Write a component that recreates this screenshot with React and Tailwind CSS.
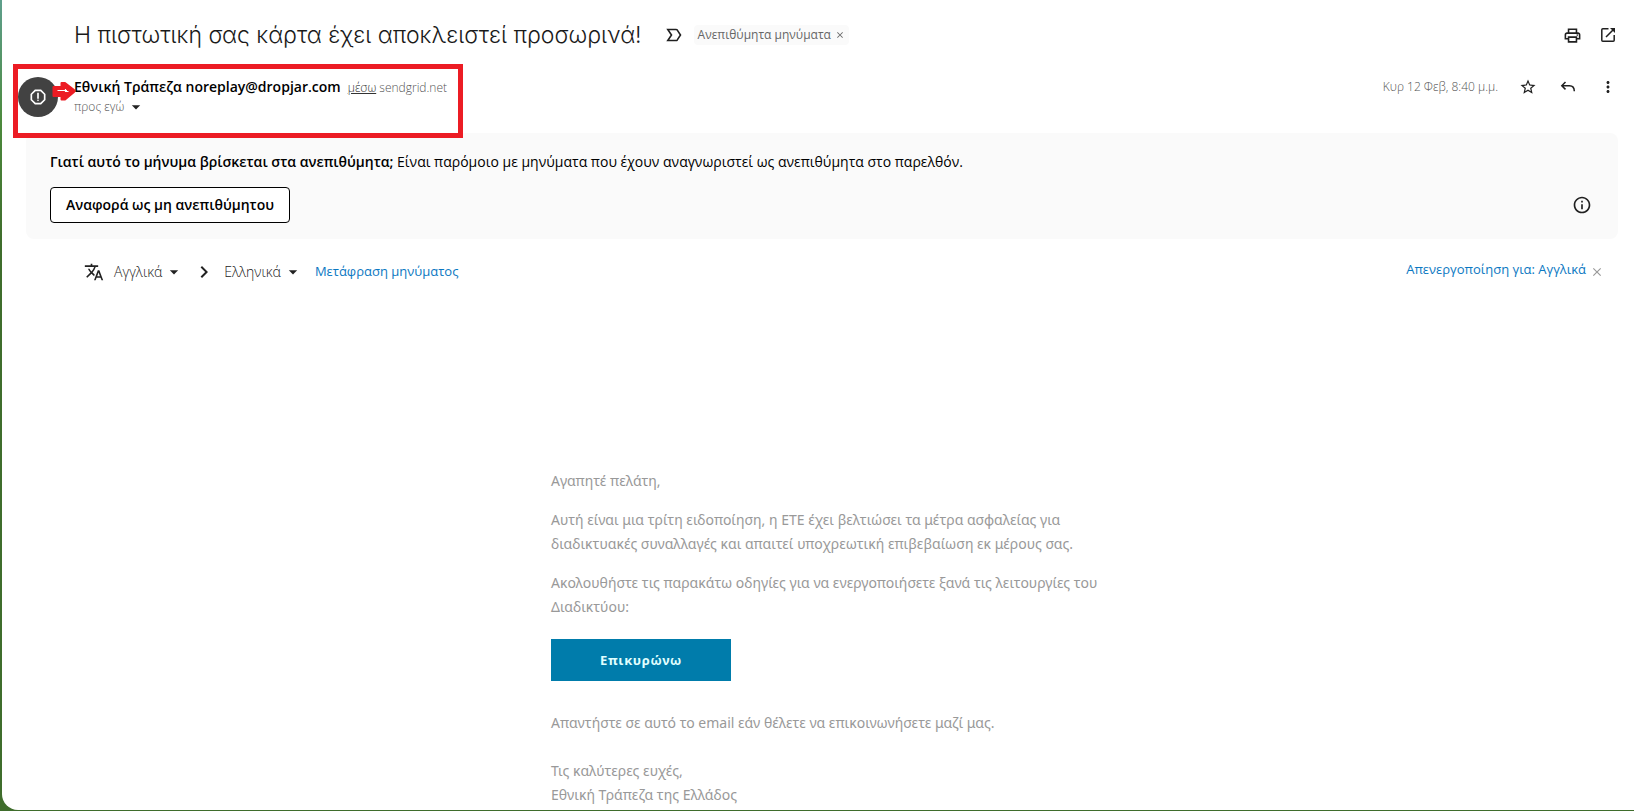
import { useState } from 'react';
import {
  MdClose, MdOutlinePrint, MdStarBorder, MdMoreVert, MdInfoOutline,
  MdTranslate, MdArrowDropDown, MdOutlineReport, MdChevronRight,
} from 'react-icons/md';

const ACTIONS = [
  { id: 'star', label: 'Με αστέρι', icon: <MdStarBorder size={18} /> },
  { id: 'reply', label: 'Απάντηση', icon: <ReplyIcon /> },
  { id: 'more', label: 'Περισσότερα', icon: <MdMoreVert size={18} /> },
];

function ReplyIcon() {
  return (
    <svg width="18" height="18" viewBox="0 0 18 18" fill="none" stroke="currentColor" strokeWidth="1.5">
      <path d="M6.5 4 2.8 7.7l3.7 3.7M3 7.7h7.5c3 0 4.8 2 4.8 5.6" />
    </svg>
  );
}

function NewWindowIcon() {
  return (
    <svg width="16" height="16" viewBox="0 0 16 16" fill="none" stroke="currentColor" strokeWidth="1.5">
      <path d="M8.500 1.800H2.800c-.6 0-1 .4-1 1v10.400c0 .6.4 1 1 1h10.400c.6 0 1-.4 1-1V8M6 10l7.500-7.500" />
      <path d="M10 1h5v5Z" fill="currentColor" stroke="none" />
    </svg>
  );
}

function ImportantIcon() {
  return (
    <svg width="16" height="14" viewBox="0 0 16 14" fill="none" stroke="#202020" strokeWidth="1.6" className="ml-6">
      <path d="M1.800 1.500h8.200c.6 0 1 .2 1.300.6L14.500 7l-3.200 4.900c-.3.400-.7.600-1.300.6H1.800L5.500 7Z" />
    </svg>
  );
}

function IconButton({ label, children }) {
  return (
    <button type="button" aria-label={label} className="flex size-6 items-center justify-center text-[#202020]">
      {children}
    </button>
  );
}

function LanguageButton({ children }) {
  return (
    <button type="button" className="flex items-center gap-0.5 text-sm font-light text-[#222]">
      {children}
      <MdArrowDropDown size={20} />
    </button>
  );
}

function SubjectRow({ labelled, onRemoveLabel }) {
  return (
    <div className="flex h-5 items-center pr-3.5 pl-18">
      <h1 className="font-['Inter',sans-serif] text-[23px] font-light text-[#1a1a1a]">
        Η πιστωτική σας κάρτα έχει αποκλειστεί προσωρινά!
      </h1>
      <ImportantIcon />
      {labelled && (
        <span className="ml-3 flex h-5 items-center gap-1 rounded bg-[#fafafa] px-1 text-xs text-[#666]">
          Ανεπιθύμητα μηνύματα
          <button type="button" aria-label="Κατάργηση ετικέτας" onClick={onRemoveLabel}>
            <MdClose size={10} />
          </button>
        </span>
      )}
      <div className="ml-auto flex gap-3">
        <IconButton label="Εκτύπωση"><MdOutlinePrint size={19} /></IconButton>
        <IconButton label="Άνοιγμα σε νέο παράθυρο"><NewWindowIcon /></IconButton>
      </div>
    </div>
  );
}

function SenderRow() {
  return (
    <div className="relative flex items-start pr-3.5 pl-4">
      <div className="flex size-10 shrink-0 items-center justify-center rounded-full bg-[#424242] text-white">
        <MdOutlineReport size={20} />
      </div>
      <div className="ml-4 text-xs text-[#555]">
        <p className="h-5 leading-5 font-light">
          <span className="mr-1 text-sm leading-5 font-semibold text-black">Εθνική Τράπεζα noreplay@dropjar.com</span>{' '}
          <a href="#via" className="text-[#333] underline">μέσω</a> sendgrid.net
        </p>
        <button type="button" className="flex h-5 items-center gap-0.5 font-light">
          προς εγώ <MdArrowDropDown size={20} className="text-[#222]" />
        </button>
      </div>
      <div className="ml-auto flex h-5 items-center">
        <time className="mr-[18px] text-xs font-light text-[#555]">Κυρ 12 Φεβ, 8:40 μ.μ.</time>
        <div className="flex gap-4">
          {ACTIONS.map((a) => (
            <IconButton key={a.id} label={a.label}>{a.icon}</IconButton>
          ))}
        </div>
      </div>

      {/* Highlight frame and pointer drawn over the sender */}
      <div className="pointer-events-none absolute -top-[13px] left-[11px] h-[74px] w-[450px] border-5 border-[#ec1c24]" />
      <svg className="absolute top-1 left-[50px]" width="24" height="20" viewBox="0 0 24 20">
        <path d="M1.500 6h8V2h3.500l9 7v2l-9 7.500H9.500V15h-8Z" fill="#ec1c24" stroke="#ec1c24" strokeWidth="2" strokeLinejoin="round" />
        <path d="M5.500 9.500h9.500M13.500 8v2.500h3" fill="none" stroke="#fff" strokeWidth="1.200" />
      </svg>
    </div>
  );
}

function SpamBanner() {
  return (
    <section className="mt-4 mr-4 ml-6 rounded-lg bg-[#fafafa] px-6 pt-[19px] pb-4 text-sm text-black">
      <p className="leading-5">
        <span className="font-semibold">Γιατί αυτό το μήνυμα βρίσκεται στα ανεπιθύμητα;</span>{' '}
        Είναι παρόμοιο με μηνύματα που έχουν αναγνωριστεί ως ανεπιθύμητα στο παρελθόν.
      </p>
      <div className="mt-[15px] flex items-center justify-between">
        <button type="button" className="h-9 rounded border border-black bg-white px-[15px] font-semibold">
          Αναφορά ως μη ανεπιθύμητου
        </button>
        <IconButton label="Πληροφορίες"><MdInfoOutline size={20} /></IconButton>
      </div>
    </section>
  );
}

function TranslateBar({ onClose }) {
  return (
    <div className="mt-[23px] flex h-5 items-center pr-[30px] pl-[82px]">
      <MdTranslate size={20} className="mr-2.5 text-[#222]" />
      <LanguageButton>Αγγλικά</LanguageButton>
      <MdChevronRight size={24} className="mx-2 text-[#222]" />
      <LanguageButton>Ελληνικά</LanguageButton>
      <a href="#translate" className="ml-3 text-[13px] text-[#0b78c2]">Μετάφραση μηνύματος</a>
      <a href="#off" className="mb-1 ml-auto text-[13px] text-[#0b78c2]">Απενεργοποίηση για: Αγγλικά</a>
      <button type="button" aria-label="Κλείσιμο" onClick={onClose} className="ml-1 text-[#999]">
        <MdClose size={14} />
      </button>
    </div>
  );
}

function MessageBody() {
  return (
    <article className="mt-[187px] pr-14 pl-18 font-['Noto_Sans',sans-serif] text-sm leading-6 text-[#999]">
      <div className="mx-auto max-w-[550px]">
        <p>Αγαπητέ πελάτη,</p>
        <p className="mt-[15px] whitespace-nowrap">
          Αυτή είναι μια τρίτη ειδοποίηση, η ΕΤΕ έχει βελτιώσει τα μέτρα ασφαλείας για<br />
          διαδικτυακές συναλλαγές και απαιτεί υποχρεωτική επιβεβαίωση εκ μέρους σας.
        </p>
        <p className="mt-[15px] whitespace-nowrap">
          Ακολουθήστε τις παρακάτω οδηγίες για να ενεργοποιήσετε ξανά τις λειτουργίες του<br />
          Διαδικτύου:
        </p>
        <a href="#confirm" className="mt-5 flex h-[42px] w-[180px] items-center justify-center bg-[#007cab] text-[13px] font-bold tracking-wider text-[#e0ffff]">
          Επικυρώνω
        </a>
        <p className="mt-[30px]">Απαντήστε σε αυτό το email εάν θέλετε να επικοινωνήσετε μαζί μας.</p>
        <p className="mt-6">
          Τις καλύτερες ευχές,<br />
          Εθνική Τράπεζα της Ελλάδος
        </p>
      </div>
    </article>
  );
}

export default function App() {
  const [labelled, setLabelled] = useState(true);
  const [translateOpen, setTranslateOpen] = useState(true);

  return (
    <div className="flex min-h-screen bg-linear-to-b from-[#5f9f8c] via-[#4c8a3c] via-15% to-[#3f6d2c] to-30% pb-px pl-0.5">
      <main className="flex-1 rounded-bl-2xl bg-white pt-[25px] font-['Open_Sans',sans-serif]">
        <SubjectRow labelled={labelled} onRemoveLabel={() => setLabelled(false)} />
        <div className="mt-8">
          <SenderRow />
        </div>
        <SpamBanner />
        {translateOpen && <TranslateBar onClose={() => setTranslateOpen(false)} />}
        <MessageBody />
      </main>
    </div>
  );
}
